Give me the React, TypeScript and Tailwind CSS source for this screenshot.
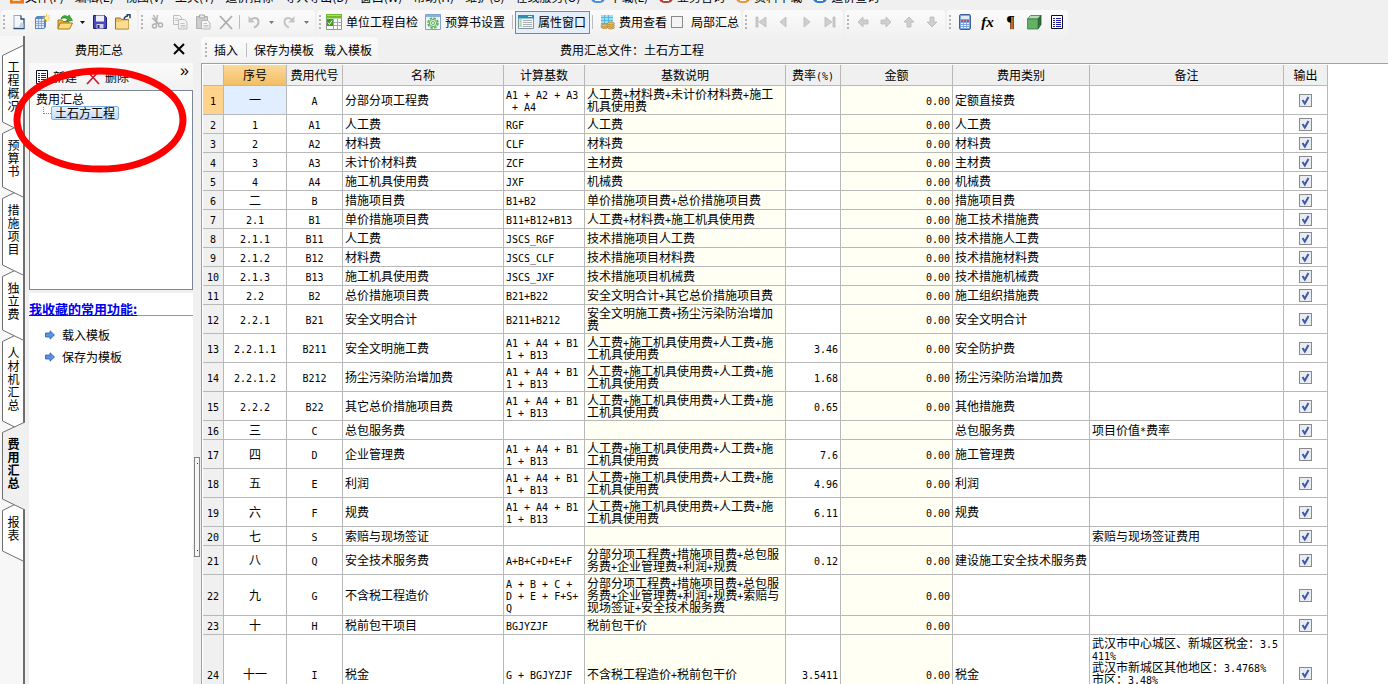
import { useState, type ReactNode } from 'react';
import clsx from 'clsx';

type Row = {
  no: string;
  code: string;
  name: string;
  base: string;
  desc: string;
  rate?: string;
  amount?: string;
  kind?: string;
  note?: string;
};

const LABOR_BASE = 'A1 + A4 + B1\n1 + B13';
const LABOR_DESC = '人工费+施工机具使用费+人工费+施\n工机具使用费';

const rows: Row[] = [
  { no: '一', code: 'A', name: '分部分项工程费', base: 'A1 + A2 + A3\n + A4', desc: '人工费+材料费+未计价材料费+施工\n机具使用费', amount: '0.00', kind: '定额直接费' },
  { no: '1', code: 'A1', name: '人工费', base: 'RGF', desc: '人工费', amount: '0.00', kind: '人工费' },
  { no: '2', code: 'A2', name: '材料费', base: 'CLF', desc: '材料费', amount: '0.00', kind: '材料费' },
  { no: '3', code: 'A3', name: '未计价材料费', base: 'ZCF', desc: '主材费', amount: '0.00', kind: '主材费' },
  { no: '4', code: 'A4', name: '施工机具使用费', base: 'JXF', desc: '机械费', amount: '0.00', kind: '机械费' },
  { no: '二', code: 'B', name: '措施项目费', base: 'B1+B2', desc: '单价措施项目费+总价措施项目费', amount: '0.00', kind: '措施项目费' },
  { no: '2.1', code: 'B1', name: '单价措施项目费', base: 'B11+B12+B13', desc: '人工费+材料费+施工机具使用费', amount: '0.00', kind: '施工技术措施费' },
  { no: '2.1.1', code: 'B11', name: '人工费', base: 'JSCS_RGF', desc: '技术措施项目人工费', amount: '0.00', kind: '技术措施人工费' },
  { no: '2.1.2', code: 'B12', name: '材料费', base: 'JSCS_CLF', desc: '技术措施项目材料费', amount: '0.00', kind: '技术措施材料费' },
  { no: '2.1.3', code: 'B13', name: '施工机具使用费', base: 'JSCS_JXF', desc: '技术措施项目机械费', amount: '0.00', kind: '技术措施机械费' },
  { no: '2.2', code: 'B2', name: '总价措施项目费', base: 'B21+B22', desc: '安全文明合计+其它总价措施项目费', amount: '0.00', kind: '施工组织措施费' },
  { no: '2.2.1', code: 'B21', name: '安全文明合计', base: 'B211+B212', desc: '安全文明施工费+扬尘污染防治增加\n费', amount: '0.00', kind: '安全文明合计' },
  { no: '2.2.1.1', code: 'B211', name: '安全文明施工费', base: LABOR_BASE, desc: LABOR_DESC, rate: '3.46', amount: '0.00', kind: '安全防护费' },
  { no: '2.2.1.2', code: 'B212', name: '扬尘污染防治增加费', base: LABOR_BASE, desc: LABOR_DESC, rate: '1.68', amount: '0.00', kind: '扬尘污染防治增加费' },
  { no: '2.2.2', code: 'B22', name: '其它总价措施项目费', base: LABOR_BASE, desc: LABOR_DESC, rate: '0.65', amount: '0.00', kind: '其他措施费' },
  { no: '三', code: 'C', name: '总包服务费', base: '', desc: '', kind: '总包服务费', note: '项目价值*费率' },
  { no: '四', code: 'D', name: '企业管理费', base: LABOR_BASE, desc: LABOR_DESC, rate: '7.6', amount: '0.00', kind: '施工管理费' },
  { no: '五', code: 'E', name: '利润', base: LABOR_BASE, desc: LABOR_DESC, rate: '4.96', amount: '0.00', kind: '利润' },
  { no: '六', code: 'F', name: '规费', base: LABOR_BASE, desc: LABOR_DESC, rate: '6.11', amount: '0.00', kind: '规费' },
  { no: '七', code: 'S', name: '索赔与现场签证', base: '', desc: '', note: '索赔与现场签证费用' },
  { no: '八', code: 'Q', name: '安全技术服务费', base: 'A+B+C+D+E+F', desc: '分部分项工程费+措施项目费+总包服\n务费+企业管理费+利润+规费', rate: '0.12', amount: '0.00', kind: '建设施工安全技术服务费' },
  { no: '九', code: 'G', name: '不含税工程造价', base: 'A + B + C +\nD + E + F+S+\nQ', desc: '分部分项工程费+措施项目费+总包服\n务费+企业管理费+利润+规费+索赔与\n现场签证+安全技术服务费', amount: '0.00' },
  { no: '十', code: 'H', name: '税前包干项目', base: 'BGJYZJF', desc: '税前包干价', amount: '0.00' },
  { no: '十一', code: 'I', name: '税金', base: 'G + BGJYZJF', desc: '不含税工程造价+税前包干价', rate: '3.5411', amount: '0.00', kind: '税金', note: '武汉市中心城区、新城区税金：3.5\n411%\n武汉市新城区其他地区：3.4768%\n市区：3.48%' },
];

const columns = [
  { label: '', width: 'w-[21px]' },
  { label: '序号', width: 'w-[63px]' },
  { label: '费用代号', width: 'w-[56px]' },
  { label: '名称', width: 'w-[161px]' },
  { label: '计算基数', width: 'w-[81px]' },
  { label: '基数说明', width: 'w-[201px]' },
  { label: '费率(%)', width: 'w-[55px]' },
  { label: '金额', width: 'w-[112px]' },
  { label: '费用类别', width: 'w-[137px]' },
  { label: '备注', width: 'w-[194px]' },
  { label: '输出', width: 'w-[44px]' },
];

const sideTabs = ['工程概况', '预算书', '措施项目', '独立费', '人材机汇总', '费用汇总', '报表'];

// Latin runs are set in a half-width mono face, so they line up with the CJK grid
function Mixed({ children }: { children?: string }) {
  if (!children) return null;
  return (
    <>
      {children.split(/([\x20-\x7e]+)/).map((part, i) =>
        i % 2 ? (
          <span key={i} className="font-['DejaVu_Sans_Mono',monospace] text-[10px] leading-[0px]">
            {part}
          </span>
        ) : (
          part
        ),
      )}
    </>
  );
}

function Grip() {
  return (
    <span className="flex w-[6px] shrink-0 flex-col items-center gap-[2px]">
      {[0, 1, 2, 3].map((i) => (
        <i key={i} className="size-[2px] bg-[#b4b4b4]" />
      ))}
    </span>
  );
}

function Sep() {
  return <span className="mx-[2px] h-[14px] w-px shrink-0 bg-[#bdbdbd]" />;
}

function Segment({ children }: { children: ReactNode }) {
  return (
    <div className="flex h-[26px] shrink-0 items-center rounded-t-sm bg-linear-to-b from-[#fbfbfb] to-[#f1f1f1] pb-[2px]">
      <Grip />
      {children}
    </div>
  );
}

function IconButton({ label, children }: { label: string; children: ReactNode }) {
  return (
    <button type="button" aria-label={label} className="flex h-[22px] w-[23px] shrink-0 items-center justify-center">
      {children}
    </button>
  );
}

function Caret({ label, color }: { label: string; color: string }) {
  return (
    <button type="button" aria-label={label} className="flex h-[22px] w-[12px] shrink-0 items-center justify-center">
      <svg width="5" height="3" viewBox="0 0 5 3" fill={color}>
        <path d="M0 0h5L2.5 3z" />
      </svg>
    </button>
  );
}

function Icon({ children }: { children: ReactNode }) {
  return (
    <svg width="16" height="16" viewBox="0 0 16 16" className="shrink-0">
      {children}
    </svg>
  );
}

function NewIcon() {
  return (
    <Icon>
      <path d="M3 1.5h7l3 3v10H3z" fill="#f4f8fd" />
      <path d="M3 1.5h7M3 1v13" stroke="#9aaabd" fill="none" />
      <path d="M10 1.500v3.500h3v9.500H2.500" stroke="#2d4b73" strokeWidth="1.300" fill="none" />
      <path d="M10 8l2.500 2v4H7z" fill="#c4d4e8" />
    </Icon>
  );
}

function NewTableIcon() {
  return (
    <Icon>
      <path d="M1 4l2-2h9v11l-2 2H1z" fill="#5b86c8" />
      <path d="M2 5h8v9H2z" fill="#e3edfa" />
      <path d="M2 7.500h8M2 9.500h8M2 11.500h8M4.500 5v9M7.500 5v9" stroke="#7fa0d0" strokeWidth=".8" />
      <path d="M12.500 0v8M8.500 4h8M9.700 1.200l5.600 5.600M15.300 1.200L9.700 6.800" stroke="#f2c230" strokeWidth="1" />
      <circle cx="12.500" cy="4" r="1.800" fill="#fff3a8" />
    </Icon>
  );
}

function OpenIcon() {
  return (
    <Icon>
      <path d="M1 6h4l1 1.500h6V14H1z" fill="#e6b84a" stroke="#a5781c" />
      <path d="M3 9h12.500l-3 6H.8z" fill="#fcdc7c" stroke="#a5781c" />
      <path d="M4 5c1-4 5-4 7-2l1-2 3.500 5.500-6 .5 1-2C8 3.500 6 3.500 4 5z" fill="#3fb23a" stroke="#1d7c20" strokeWidth=".7" />
    </Icon>
  );
}

function SaveIcon() {
  return (
    <Icon>
      <path d="M1.500 1.500h11l2 2v11h-13z" fill="#4a4ab8" stroke="#1f1f80" />
      <path d="M4 1.500h8v6H4z" fill="#f0f0fb" />
      <path d="M4.500 10h7v4.500h-7z" fill="#cfcfe8" />
      <path d="M5.500 11h2v3h-2z" fill="#26268a" />
    </Icon>
  );
}

function FolderOutIcon() {
  return (
    <Icon>
      <path d="M.5 4h5l1 1.500h7V15H.5z" fill="#eac066" stroke="#9c7424" />
      <path d="M1 8l12.500-1.500V14.500H1z" fill="#f9dc90" />
      <path d="M9 5c.5-2 2-3 4-3M11.500 .8h3.500v3.500" stroke="#2c4368" strokeWidth="1.500" fill="none" />
    </Icon>
  );
}

function CutIcon() {
  return (
    <Icon>
      <g fill="none" stroke="#b2b2b2" strokeWidth="1.500">
        <path d="M4.500 1l4.500 9M8.500 1L7 10" />
        <circle cx="5.500" cy="12" r="2" />
        <circle cx="11.500" cy="11" r="2" />
        <path d="M3 4l7 6" />
      </g>
    </Icon>
  );
}

function CopyIcon() {
  return (
    <Icon>
      <g fill="#f4f4f4" stroke="#bdbdbd">
        <path d="M1.500 1.500h6l2 2v7h-8z" />
        <path d="M6.500 5.500h6l2.500 2.500v7H6.500z" />
      </g>
      <path d="M3 4.500h3M3 6.500h3M8.500 9.500h4M8.500 11.500h5M8.500 13h5" stroke="#c4c4c4" />
    </Icon>
  );
}

function PasteIcon() {
  return (
    <Icon>
      <path d="M1.500 2.500h11v12h-11z" fill="#cfcfcf" stroke="#b0b0b0" />
      <path d="M4.500 1h5v3h-5z" fill="#e6e6e6" stroke="#aaa" />
      <path d="M6.500 6.500h6l2.500 2.500v6H6.500z" fill="#f6f6f6" stroke="#b5b5b5" />
      <path d="M8.500 9.500h3.500M8.500 11.500h5M8.500 13h5" stroke="#c4c4c4" />
    </Icon>
  );
}

function CheckTableIcon() {
  return (
    <Icon>
      <path d="M.5.5h15v15H.5z" fill="#fff" stroke="#8c9a8c" />
      <path d="M0 0h16v4.500H0z" fill="#6fbb2c" />
      <path d="M1 1.500h14" stroke="#a8dc70" />
      <path d="M7.500 5v10M11.500 5v10M1 8.500h14M1 11.500h14" stroke="#a0a8b4" />
      <path d="M1 5h6v7H1z" fill="#3e9a24" />
      <path d="M2 8.500l1.500 2L6 6.500" stroke="#fff" fill="none" />
    </Icon>
  );
}

function GearTableIcon() {
  return (
    <Icon>
      <path d="M.5.5h15v15H.5z" fill="#eef6fb" stroke="#7fa3d0" />
      <path d="M1 1h14v2H1z" fill="#8ab0e2" />
      <circle cx="8" cy="9" r="5" fill="#dff0da" stroke="#5fae5c" strokeWidth="1.600" strokeDasharray="2.600 1.300" />
      <circle cx="8" cy="9" r="3.600" fill="none" stroke="#5fae5c" />
      <circle cx="8" cy="9" r="1.500" fill="#fff" stroke="#5fae5c" />
    </Icon>
  );
}

function PropertyIcon() {
  return (
    <Icon>
      <path d="M.5 1.500h15v13H.5z" fill="#f6f8f8" stroke="#8797a0" />
      <path d="M0 1h16v3.500H0z" fill="#2a8fb0" />
      <path d="M10 2.500h4" stroke="#d6f2fa" />
      <path d="M2.500 5.500v8" stroke="#57b56c" strokeWidth="2" strokeDasharray="1 1" />
      <path d="M5 6.500h9M5 8.500h9M5 10.500h9M5 12.500h9" stroke="#a8b0b4" />
    </Icon>
  );
}

function FeeIcon() {
  return (
    <Icon>
      <path d="M1 1h12v10H1z" fill="#9fdcf5" />
      <path d="M1 3.500h12M1 6.500h12M1 9.500h12M4.500 1v10M8.500 1v10" stroke="#4aaedb" strokeWidth=".8" />
      <g fill="#e8b85a" stroke="#a67a2c" strokeWidth=".6">
        <ellipse cx="4.500" cy="13" rx="3.500" ry="1.500" />
        <ellipse cx="4.500" cy="11.500" rx="3.500" ry="1.500" />
        <ellipse cx="11" cy="13.500" rx="3.500" ry="1.500" />
        <ellipse cx="11" cy="11.500" rx="3.500" ry="1.500" />
        <ellipse cx="11" cy="9.500" rx="3.500" ry="1.500" />
      </g>
    </Icon>
  );
}

function ListIcon() {
  return (
    <svg width="14" height="14" viewBox="0 0 14 14" className="shrink-0">
      <path d="M1.500.5h11v13h-11z" fill="#fff" stroke="#0a0a2a" />
      <path d="M3 3.500h2M6 3.500h5M3 5.500h2M6 5.500h5M3 7.500h2M6 7.500h5M3 9.500h2M6 9.500h5M3 11.500h2M6 11.500h5" stroke="#1c1c9c" />
    </svg>
  );
}

function CalculatorIcon() {
  return (
    <Icon>
      <rect x="2.500" y=".5" width="11" height="15" rx="1.500" fill="#7fa6dc" stroke="#3c5f98" />
      <path d="M4 2h8v3H4z" fill="#dcebfb" />
      <path d="M4 7h8" stroke="#c8323c" strokeWidth="1.500" strokeDasharray="2 1" />
      <path d="M4 9.500h8M4 11.500h8M4 13.500h8" stroke="#f2f7ff" strokeWidth="1.200" strokeDasharray="2 1" />
    </Icon>
  );
}

function CubeIcon() {
  return (
    <Icon>
      <path d="M1.500 5l3-3.500h10.500L12 5z" fill="#b4e0b4" stroke="#3e7a42" strokeWidth=".8" />
      <path d="M12 5l3-3.500v9L12 15z" fill="#2f7436" stroke="#254f29" strokeWidth=".8" />
      <path d="M1.500 5H12v10H1.500z" fill="#62b266" stroke="#3e7a42" strokeWidth=".8" />
    </Icon>
  );
}

function GrayIcon({ d }: { d: string }) {
  return (
    <Icon>
      <path d={d} fill="#cfcfcf" stroke="#b9b9b9" strokeWidth=".8" />
    </Icon>
  );
}

function Menu() {
  return (
    <nav aria-label="菜单" className="flex h-[4px] shrink-0 items-end gap-[11px] overflow-hidden pl-[10px] text-[12px] leading-[14px] whitespace-nowrap">
      <svg width="16" height="7" viewBox="0 0 16 7" className="-mr-[10px] w-[14px] shrink-0">
        <path d="M0 0h16v7H0z" fill="#e87a1e" />
        <path d="M3 0h9v4H3z" fill="#fbe2b8" />
      </svg>
      <button type="button">文件(F)</button>
      <button type="button">编辑(E)</button>
      <button type="button">视图(V)</button>
      <button type="button">工具(T)</button>
      <button type="button">造价指标</button>
      <button type="button">导入导出(D)</button>
      <button type="button">窗口(W)</button>
      <button type="button">帮助(H)</button>
      <button type="button">维护(S)</button>
      <button type="button">在线服务(O)</button>
      <MenuExtra color="#4a90d8">下载(L)</MenuExtra>
      <MenuExtra color="#b0483c">业务咨询</MenuExtra>
      <MenuExtra color="#e8963c">资料下载</MenuExtra>
      <MenuExtra color="#2c7cc8">造价查询</MenuExtra>
    </nav>
  );
}

function MenuExtra({ color, children }: { color: string; children: string }) {
  return (
    <button type="button" className="flex items-end gap-1">
      <svg width="14" height="14" viewBox="0 0 14 14">
        <rect width="14" height="13" rx="5" fill={color} />
        <path d="M4 10h6" stroke="#fff" strokeWidth="2" />
      </svg>
      {children}
    </button>
  );
}

function Toolbar() {
  return (
    <div className="flex h-[32px] shrink-0 items-end gap-[2px] pl-px text-[12px]">
      <Segment>
        <IconButton label="新建"><NewIcon /></IconButton>
        <IconButton label="新建表"><NewTableIcon /></IconButton>
        <IconButton label="打开"><OpenIcon /></IconButton>
        <Caret label="打开选项" color="#111" />
        <IconButton label="保存"><SaveIcon /></IconButton>
        <IconButton label="另存"><FolderOutIcon /></IconButton>
        <span className="w-[3px]" />
      </Segment>
      <Segment>
        <IconButton label="剪切"><CutIcon /></IconButton>
        <IconButton label="复制"><CopyIcon /></IconButton>
        <IconButton label="粘贴"><PasteIcon /></IconButton>
        <IconButton label="删除">
          <Icon><path d="M2 2l12 13M14 2L2 15" stroke="#acacac" strokeWidth="1.800" /></Icon>
        </IconButton>
        <Sep />
        <IconButton label="撤销">
          <Icon>
            <path d="M5 5.500c4-3 7.500-1 7.500 2s-2 5-4.500 6" fill="none" stroke="#bcbcbc" strokeWidth="2" />
            <path d="M2.500 2v6.500H9z" fill="#c4c4c4" />
          </Icon>
        </IconButton>
        <Caret label="撤销选项" color="#777" />
        <IconButton label="重做">
          <Icon>
            <path d="M11 5.500c-4-3-7.500-1-7.500 2s2 5 4.500 6" fill="none" stroke="#c4c4c4" strokeWidth="2" />
            <path d="M13.500 2v6.500H7z" fill="#c4c4c4" />
          </Icon>
        </IconButton>
        <Caret label="重做选项" color="#777" />
        <span className="w-[3px]" />
      </Segment>
      <Segment>
        <button type="button" className="flex items-center gap-1 pr-[7px] pl-[3px]"><CheckTableIcon />单位工程自检</button>
        <button type="button" className="flex items-center gap-1 pr-[5px]"><GearTableIcon />预算书设置</button>
        <Sep />
        <button type="button" className="flex h-[23px] w-[75px] items-center gap-1 border border-[#3c96f0] bg-[#e4effb] pl-[2px]">
          <PropertyIcon />属性窗口
        </button>
        <Sep />
        <button type="button" className="flex items-center gap-[3px] pr-1 pl-[5px]"><FeeIcon />费用查看</button>
        <label className="flex items-center gap-2 pr-[2px]">
          <input type="checkbox" className="size-[12px] appearance-none border border-[#8a8a8a] bg-[#f4f4f4]" />
          局部汇总
        </label>
      </Segment>
      <Segment>
        <IconButton label="首条"><GrayIcon d="M3 3h2v10H3zM13 3v10L6 8z" /></IconButton>
        <IconButton label="上一条"><GrayIcon d="M10 3v10L4 8z" /></IconButton>
        <IconButton label="下一条"><GrayIcon d="M5 3v10l6-5z" /></IconButton>
        <IconButton label="末条"><GrayIcon d="M11 3h2v10h-2zM3 3v10l7-5z" /></IconButton>
        <span className="w-[2px]" />
      </Segment>
      <Segment>
        <IconButton label="左移"><GrayIcon d="M3 8l5-5v3h5v4H8v3z" /></IconButton>
        <IconButton label="右移"><GrayIcon d="M13 8L8 3v3H3v4h5v3z" /></IconButton>
        <IconButton label="上移"><GrayIcon d="M8 3l5 5h-3v5H6V8H3z" /></IconButton>
        <IconButton label="下移"><GrayIcon d="M8 13l5-5h-3V3H6v5H3z" /></IconButton>
        <span className="w-[2px]" />
      </Segment>
      <Segment>
        <IconButton label="计算器"><CalculatorIcon /></IconButton>
        <IconButton label="函数">
          <span className="font-['Liberation_Serif',serif] text-[15px] leading-none font-bold italic">fx</span>
        </IconButton>
        <IconButton label="特殊符号">
          <span className="font-['Liberation_Serif',serif] text-[16px] leading-none font-bold">¶</span>
        </IconButton>
        <IconButton label="模型"><CubeIcon /></IconButton>
        <IconButton label="清单"><ListIcon /></IconButton>
      </Segment>
    </div>
  );
}

function SideTabs() {
  const [active, setActive] = useState('费用汇总');
  return (
    <nav
      aria-label="模块"
      className="flex w-[25px] shrink-0 flex-col border-r-2 border-[#6e6e6e] bg-[#f7f7f7] pt-[19px] pl-[2px]"
    >
      {sideTabs.map((tab, i) => {
        const on = tab === active;
        const h = tab.length * 13 + 26;
        return (
          <button
            key={tab}
            type="button"
            onClick={() => setActive(tab)}
            style={{ height: h, zIndex: on ? 10 : sideTabs.length - i }}
            className={clsx('relative shrink-0 pt-[5px] text-[12px] leading-[13px]', on && 'font-bold')}
          >
            <svg
              width="24"
              height={h + 20}
              viewBox={`0 -10 24 ${h + 20}`}
              className="absolute -top-[10px] left-0"
            >
              <path
                d={on ? `M23-10L.5.500V${h - 11}L23 ${h}` : `M21-9.500L.5.500V${h - 11}L21 ${h - 1}`}
                fill={on ? '#f0f0f0' : '#fff'}
                stroke="#6e6e6e"
              />
            </svg>
            <span className="relative mx-auto mr-[3px] block h-full w-[13px] break-all">{tab}</span>
          </button>
        );
      })}
    </nav>
  );
}

function ArrowIcon() {
  return (
    <svg width="10" height="10" viewBox="0 0 10 10">
      <path d="M.5 3h4.500V.8L9.500 5 5 9.200V7H.5z" fill="#5b92e4" stroke="#2c5cae" strokeWidth=".8" />
    </svg>
  );
}

function Explorer() {
  return (
    <aside className="flex w-[168px] shrink-0 flex-col pl-1 text-[12px]">
      <header className="flex h-[27px] shrink-0 items-center justify-between pr-[8px] pl-[46px]">
        费用汇总
        <button type="button" aria-label="关闭">
          <svg width="12" height="12" viewBox="0 0 12 12" className="-mt-[2px]">
            <path d="M1 1l10 10M11 1L1 11" stroke="#000" strokeWidth="2" />
          </svg>
        </button>
      </header>
      <div className="flex h-[27px] shrink-0 items-center bg-linear-to-b from-[#fbfbfb] to-[#f1f1f1] pl-[6px]">
        <button type="button" className="flex w-[50px] items-center gap-1"><ListIcon />新建</button>
        <button type="button" className="flex items-center gap-1">
          <Icon><path d="M2 2l12 13M14 2L2 15" stroke="#cc1f3c" strokeWidth="1.800" /></Icon>
          删除
        </button>
        <button type="button" className="mr-1 mb-3 ml-auto font-['Liberation_Sans',sans-serif] text-[16px] leading-none">»</button>
      </div>
      <ul className="h-[200px] shrink-0 border border-[#7d8694] bg-white pt-px pl-[6px] leading-[14px]">
        <li>
          费用汇总
          <ul className="pl-[7px]">
            <li className="flex items-center">
              <i className="-mt-[6px] h-[7px] w-[8px] border-b border-l border-dotted border-[#888]" />
              <button type="button" className="h-[14px] rounded-xs border border-[#84acdd] bg-linear-to-b from-[#eaf3fd] to-[#c2dbf6] px-[3px] leading-[12px]">
                土石方工程
              </button>
            </li>
          </ul>
        </li>
      </ul>
      <section className="mt-[3px] flex-1 bg-white">
        <h2 className="mb-[8px] h-[23px] border-b border-[#9a9a9a] pt-[7px] text-[13px] leading-[18px] font-bold whitespace-nowrap text-[#0000f0] underline">
          我收藏的常用功能:
        </h2>
        <a href="#load" className="flex h-[22px] items-center gap-[7px] pl-[16px]"><ArrowIcon />载入模板</a>
        <a href="#save" className="flex h-[22px] items-center gap-[7px] pl-[16px]"><ArrowIcon />保存为模板</a>
      </section>
    </aside>
  );
}

function FeeTable() {
  return (
    <table className="w-[1125px] table-fixed border-separate border-spacing-0 text-[12px] leading-[12px]">
      <thead>
        <tr className="h-[21px]">
          {columns.map(({ label, width }, i) => (
            <th
              key={i}
              className={clsx(
                width,
                'border-r border-b border-[#b8b8b8] p-0 text-center font-normal',
                i === 1 ? 'bg-linear-to-b from-[#fbd999] to-[#f3bd63]' : 'bg-[#f0f0f0]',
              )}
            >
              <Mixed>{label}</Mixed>
            </th>
          ))}
        </tr>
      </thead>
      <tbody className="[&_td]:border-r [&_td]:border-b [&_td]:border-[#b8b8b8] [&_td]:px-[2px] [&_td]:py-[2px] [&_td]:whitespace-pre">
        {rows.map((row, i) => {
          const tall = i === rows.length - 1;
          return (
            <tr key={row.code} className={tall ? 'h-[78px]' : 'h-[19px]'}>
              <th
                scope="row"
                className={clsx(
                  'border-r border-b border-[#b8b8b8] p-0 font-normal',
                  i === 0 ? 'bg-[#ffd38c]' : 'bg-[#f0f0f0]',
                )}
              >
                <Mixed>{String(i + 1)}</Mixed>
              </th>
              <td className={clsx('text-center', i === 0 && 'bg-[#e0eeff]')}><Mixed>{row.no}</Mixed></td>
              <td className="text-center"><Mixed>{row.code}</Mixed></td>
              <td>{row.name}</td>
              <td><Mixed>{row.base}</Mixed></td>
              <td className="bg-[#fffff4]"><Mixed>{row.desc}</Mixed></td>
              <td className="text-right"><Mixed>{row.rate}</Mixed></td>
              <td className="bg-[#fffff4] text-right"><Mixed>{row.amount}</Mixed></td>
              <td>{row.kind}</td>
              <td className={tall ? 'align-top' : ''}><Mixed>{row.note}</Mixed></td>
              <td>
                <label className="relative mx-auto block size-[13px]">
                  <input
                    type="checkbox"
                    defaultChecked
                    aria-label={`输出 ${i + 1}`}
                    className="peer block size-[13px] appearance-none border border-[#8a8a8a] bg-[#e9edf2]"
                  />
                  <svg viewBox="0 0 13 13" className="absolute inset-0 hidden peer-checked:block">
                    <path d="M3.500 6l2.300 3.500L9.500 3" fill="none" stroke="#3c5aa6" strokeWidth="2" />
                  </svg>
                </label>
              </td>
            </tr>
          );
        })}
      </tbody>
    </table>
  );
}

export default function App() {
  return (
    <div className="relative flex h-screen flex-col overflow-hidden bg-[#f0f0f0] font-['Noto_Sans_CJK_SC',sans-serif] text-black">
      <Menu />
      <Toolbar />
      <div className="flex min-h-0 flex-1">
        <SideTabs />
        <Explorer />
        <div className="flex w-[8px] shrink-0 flex-col pl-px">
          <span className="mt-[421px] flex h-[100px] w-[6px] flex-col items-center justify-between border border-[#808080] bg-[#f6f6f6] py-[5px]">
            <i className="size-px bg-[#2020a0]" />
            <i className="size-px bg-[#2020a0]" />
          </span>
        </div>
        <main className="flex min-w-0 flex-1 flex-col">
          <div className="flex h-[27px] shrink-0 items-center text-[12px]">
            <div className="flex h-[25px] w-[177px] items-center rounded-t-sm bg-linear-to-b from-[#fbfbfb] to-[#f3f3f3] pl-[2px]">
              <Grip />
              <button type="button" className="mr-[6px] ml-[5px]">插入</button>
              <Sep />
              <button type="button" className="mr-[10px] ml-[5px]">保存为模板</button>
              <button type="button">载入模板</button>
            </div>
            <h1 className="pl-[182px]">费用汇总文件：土石方工程</h1>
          </div>
          <div className="min-h-0 flex-1 overflow-hidden border-t border-l border-[#a0a0a0] bg-white pt-px pl-px">
            <FeeTable />
          </div>
        </main>
      </div>
      <svg width="174" height="108" viewBox="0 0 174 108" className="pointer-events-none absolute top-[66px] left-[13px] z-20">
        <ellipse cx="87" cy="54" rx="83" ry="49" fill="none" stroke="#fe0000" strokeWidth="7" />
      </svg>
    </div>
  );
}
